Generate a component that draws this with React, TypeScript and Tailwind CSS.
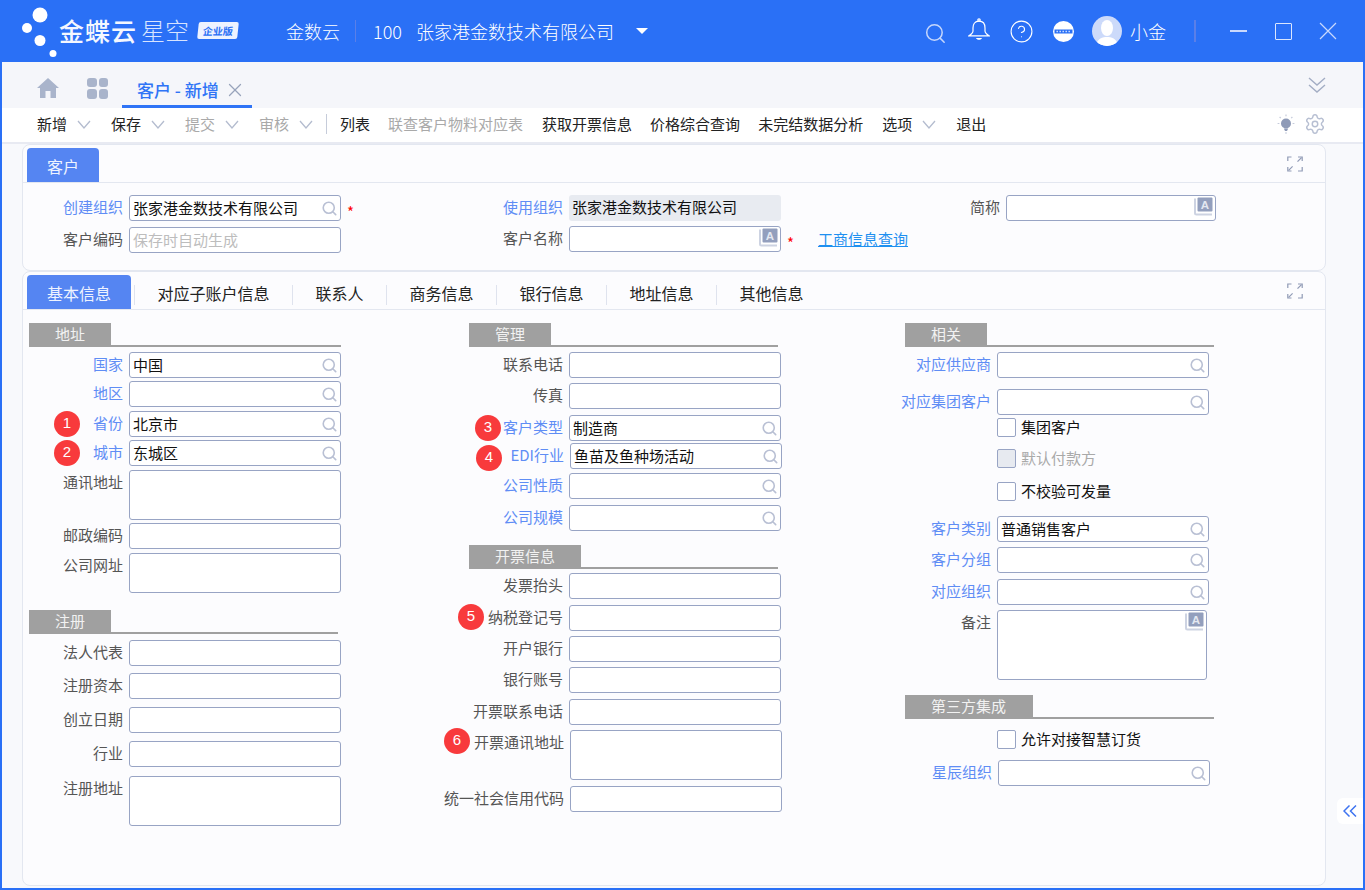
import React from 'react';
import { CircleHelp, Settings, X } from 'lucide-react';

function SearchIcon({ className, weight = 1.7 }: { className: string; weight?: number }) {
  return (
    <svg viewBox="0 0 16 16" fill="none" stroke="currentColor" className={className}>
      <circle cx="7.2" cy="7.2" r="5.9" strokeWidth={weight} />
      <path d="M11.5 11.5 L14.6 14.6" strokeWidth={weight} strokeLinecap="round" />
    </svg>
  );
}

function LangIcon() {
  return (
    <svg viewBox="0 0 19 19" className="w-[19px] h-[19px]">
      <path d="M1 1.5 V16 a1.5 1.5 0 0 0 1.5 1.5 H18" fill="none" stroke="#cdd3e2" strokeWidth="2" />
      <rect x="3.5" y="0.5" width="15" height="14" rx="1" fill="#939fbd" />
      <text x="11" y="12" textAnchor="middle" fontSize="11.5" fontWeight="700" fill="#e4e8f1" fontFamily="Liberation Sans">A</text>
    </svg>
  );
}

function ExpandIcon() {
  return (
    <svg viewBox="0 0 16 16" fill="none" stroke="#8f9ab5" strokeWidth="1.2" className="w-[16px] h-[16px]">
      <path d="M0.8 5 V1 H4.5" />
      <path d="M11 1 H15.2 V5" />
      <path d="M15.2 11 V15 H11" />
      <path d="M0.8 11 V15 H4.5" />
      <path d="M14.5 1.6 L10.5 5.6" />
      <path d="M1.6 14.4 L5.6 10.4" />
    </svg>
  );
}

function MenuChevron() {
  return (
    <svg viewBox="0 0 14 9" fill="none" stroke="#b4bccf" strokeWidth="1.3" className="ml-[10px] w-[14px] h-[9px]">
      <path d="M1 1 L7 8 L13 1" />
    </svg>
  );
}

function Logo() {
  return (
    <div className="flex items-center w-[264px] h-[62px] shrink-0">
      <svg viewBox="0 0 60 62" className="w-[60px] h-[62px] shrink-0" fill="#fff">
        <circle cx="40" cy="15" r="7.5" />
        <circle cx="27" cy="28" r="5" />
        <circle cx="40" cy="40.5" r="5.5" />
        <circle cx="53" cy="53.5" r="3.5" />
      </svg>
      <span className="text-[25px] font-medium text-[#f4f7ff] tracking-[1px] leading-[30px] -ml-[1px] mb-[2px]">金蝶云</span>
      <span className="text-[24px] font-light text-[#d8e4ff] ml-[4px] leading-[30px] mb-[2px]">星空</span>
      <span className="ml-[9px] mb-[2px] w-[40px] h-[17px] bg-[#eef3ff] rounded-[2px] -skew-x-6 text-[10px] font-bold text-[#2a6ff5] leading-[17px] text-center">企业版</span>
    </div>
  );
}

function TopBar() {
  return (
    <div className="flex items-center h-[62px] bg-[#2a70f6] text-white shrink-0">
      <Logo />
      <span className="ml-[22px] text-[18px] font-light leading-[62px] pb-[1px]">金数云</span>
      <span className="ml-[15px] w-px h-[22px] bg-[#5a7fe8]" />
      <span className="ml-[17px] text-[18px] font-light">100</span>
      <span className="ml-[14px] text-[18px] font-light">张家港金数技术有限公司</span>
      <span className="ml-[22px] w-0 h-0 border-x-[6px] border-x-transparent border-t-[6px] border-t-white" />
      <div className="ml-auto flex items-center pr-[28px]">
        <SearchIcon className="w-[21px] h-[21px] text-[#c5d6fc] mt-[5px]" weight={1.15} />
        <svg viewBox="0 0 22 24" fill="none" stroke="#fff" strokeWidth="1.2" className="ml-[22px] w-[22px] h-[24px] mb-[2px]">
          <circle cx="11" cy="2" r="1.2" />
          <path d="M11 3.2 C6.5 3.2 5 6.5 5 10 V13 C5 15 3 16.5 1 17.8 H21 C19 16.5 17 15 17 13 V10 C17 6.5 15.5 3.2 11 3.2 Z" />
          <path d="M8 20 H14 C13.5 22.4 8.5 22.4 8 20 Z" fill="#fff" stroke="none" />
        </svg>
        <CircleHelp className="w-[25px] h-[25px] ml-[19px]" strokeWidth={1.05} />
        <svg viewBox="0 0 21 21" className="ml-[19px] w-[21px] h-[21px]">
          <circle cx="10.5" cy="10.5" r="10.5" fill="#fff" />
          <rect x="1.5" y="8.5" width="18" height="4" fill="#2a70f6" />
          <path d="M3.5 10.5 H17.5" stroke="#dbe6fe" strokeWidth="1.4" strokeDasharray="1.4 1.6" />
        </svg>
        <span className="ml-[18px] w-[30px] h-[30px] rounded-full bg-[#ccdafa] overflow-hidden">
          <svg viewBox="0 0 30 30" className="w-[30px] h-[30px]" fill="#fff">
            <ellipse cx="15" cy="12" rx="6" ry="8" />
            <path d="M4 30 C5 22 11 21 15 21 C19 21 25 22 26 30 Z" />
          </svg>
        </span>
        <span className="ml-[8px] text-[18px] font-light">小金</span>
        <span className="ml-[28px] w-[2px] h-[22px] bg-[#5a7fe8]" />
        <span className="ml-[34px] w-[17px] h-[2px] bg-[#c9d9fd]" />
        <span className="ml-[28px] w-[17px] h-[17px] border-[1.5px] border-[#dbe6fe] rounded-[1px]" />
        <svg viewBox="0 0 18 18" fill="none" stroke="#c9d9fd" strokeWidth="1.2" className="ml-[27px] w-[18px] h-[18px]">
          <path d="M1 1 L17 17 M17 1 L1 17" />
        </svg>
      </div>
    </div>
  );
}

function TabBar() {
  return (
    <div className="flex items-center h-[46px] bg-[#f5f6fa] shrink-0 relative">
      <svg viewBox="0 0 22 20" className="ml-[35px] w-[22px] h-[20px] mt-[6px]" fill="#a9b4cb">
        <path d="M11 0 L22 10 H19 V20 H13.5 V13 H8.5 V20 H3 V10 H0 Z" />
      </svg>
      <span className="ml-[28px] mt-[6px] grid grid-cols-2 gap-[2px] w-[21px]">
        <i className="h-[9.5px] rounded-[3px] bg-[#a9b4cb]" />
        <i className="h-[9.5px] rounded-[3px] bg-[#a9b4cb]" />
        <i className="h-[9.5px] rounded-[3px] bg-[#a9b4cb]" />
        <i className="h-[9.5px] rounded-[3px] bg-[#a9b4cb]" />
      </span>
      <div className="ml-[14px] self-end flex items-center h-[31px] w-[130px] pl-[15px] border-b-[3px] border-[#2f74f6] text-[#2f74f6] text-[17px] font-medium whitespace-pre">
        <span className="-mt-[2px]">客户 - 新增</span>
        <X className="ml-[5px] w-[22px] h-[22px] text-[#98a3bb] -mt-[2px]" strokeWidth={1.4} />
      </div>
      <svg viewBox="0 0 18 16" fill="none" stroke="#a3adc4" strokeWidth="1.4" className="absolute right-[37px] top-[15px] w-[18px] h-[16px]">
        <path d="M1 1 L9 8 L17 1 M1 8 L9 15 L17 8" />
      </svg>
    </div>
  );
}

function ToolItem({ text, off, menu, gap }: { text: string; off?: boolean; menu?: boolean; gap?: string }) {
  return (
    <div className={`flex items-center ${gap ?? (menu ? 'mr-[20px]' : 'mr-[18px]')} ${off ? 'text-[#a9a9a9]' : 'text-[#222]'}`}>
      <span>{text}</span>
      {menu && <MenuChevron />}
    </div>
  );
}

function ToolBar() {
  return (
    <div className="flex items-center h-[32px] pb-[2px] bg-white pl-[35px] text-[15px] shrink-0 border-b-[2px] border-[#e8eaf2] box-content">
      <ToolItem text="新增" menu />
      <ToolItem text="保存" menu />
      <ToolItem text="提交" off menu />
      <div className="flex items-center text-[#a9a9a9]">
        <span>审核</span>
        <MenuChevron />
      </div>
      <span className="ml-[13px] mr-[13px] w-px h-[20px] bg-[#c6ccda]" />
      <ToolItem text="列表" />
      <ToolItem text="联查客户物料对应表" off gap="mr-[19px]" />
      <ToolItem text="获取开票信息" />
      <ToolItem text="价格综合查询" />
      <ToolItem text="未完结数据分析" gap="mr-[19px]" />
      <ToolItem text="选项" menu />
      <ToolItem text="退出" />
      <div className="ml-auto flex items-center pr-[37px]">
        <svg viewBox="0 0 18 20" className="w-[18px] h-[20px]" fill="none" stroke="#c5cbdb" strokeWidth="1.2">
          <circle cx="9" cy="9.5" r="5" fill="#8e9ab7" stroke="none" />
          <path d="M6.8 14.5 H11.2 L10 17 H8 Z" fill="#8e9ab7" stroke="none" />
          <path d="M8 19 H10 M9 0.5 V2.2 M2.6 3 L3.8 4.2 M15.4 3 L14.2 4.2 M0.6 9.5 H2.4 M15.6 9.5 H17.4" />
        </svg>
        <Settings className="ml-[9px] w-[22px] h-[22px] text-[#b7bfd2]" strokeWidth={1.6} />
      </div>
    </div>
  );
}

type Row = {
  label?: string;
  link?: boolean;
  value?: string;
  placeholder?: string;
  kind?: 'search' | 'lang' | 'plain' | 'shaded';
  mt: string;
  box?: string;
  extra?: React.ReactNode;
  badge?: { n: number; pos: string };
  check?: 'on' | 'off';
  shift?: string;
};

function Badge({ n, pos }: { n: number; pos: string }) {
  return (
    <span className={`absolute top-0 w-[26px] h-[26px] rounded-full bg-[#f83a3c] text-white text-[15px] leading-[24px] text-center font-['Liberation_Sans',sans-serif] ${pos}`}>
      {n}
    </span>
  );
}

function FormRow({ row, labelW = 'w-[94px]' }: { row: Row; labelW?: string }) {
  if (row.check) {
    return (
      <div className={`flex items-center h-[19px] ${row.mt}`}>
        <span className={`${labelW} shrink-0`} />
        <span className={`ml-[6px] w-[19px] h-[19px] rounded-[2px] border border-[#98a4c4] ${row.check === 'off' ? 'bg-[#e7eaf0]' : 'bg-white'}`} />
        <span className={`ml-[5px] text-[15px] ${row.check === 'off' ? 'text-[#a9a9a9]' : 'text-[#111]'}`}>{row.label}</span>
      </div>
    );
  }
  const kind = row.kind ?? 'search';
  return (
    <div className={`relative flex items-start ${row.mt} ${row.shift ?? ''}`}>
      {row.badge && <Badge n={row.badge.n} pos={row.badge.pos} />}
      <label className={`${labelW} shrink-0 flex justify-end text-[15px] leading-[23px] whitespace-nowrap ${row.link ? 'text-[#5f8df5]' : 'text-[#555]'}`}>
        {row.label}
      </label>
      <div
        className={`ml-[6px] relative shrink-0 rounded-[3px] ${row.box ?? 'w-[212px] h-[26px]'} ${
          kind === 'shaded' ? 'bg-[#e8ebf1]' : 'bg-white border border-[#98a4c4]'
        }`}
      >
        <span className={`absolute left-[3px] top-0 text-[15px] leading-[24px] whitespace-nowrap ${row.placeholder ? 'text-[#bdbdbd]' : 'text-[#111]'}`}>
          {row.value ?? row.placeholder}
        </span>
        {kind === 'search' && <SearchIcon className="absolute right-[3px] top-[5px] w-[15px] h-[15px] text-[#b9c0d4]" />}
        {kind === 'lang' && (
          <span className="absolute right-[2px] top-[1px]">
            <LangIcon />
          </span>
        )}
      </div>
      {row.extra}
    </div>
  );
}

function Section({ title, box, line, mt }: { title: string; box: string; line: string; mt: string }) {
  return (
    <div className={`h-[24px] border-b-[2px] border-[#a0a0a0] ${line} ${mt}`}>
      <div className={`h-[22px] bg-[#a0a0a0] text-[#f2f2f2] text-[15px] leading-[21px] pl-[26px] ${box}`}>{title}</div>
    </div>
  );
}

const Star = <span className="ml-[6px] mt-[7px] text-[15px] text-[#f00] leading-[20px]">*</span>;

type Item = Row | { section: string; box: string; line: string; mt: string };

const leftRows: Item[] = [
  { section: '地址', box: 'w-[82px]', line: 'w-[312px]', mt: 'mt-0' },
  { label: '国家', link: true, value: '中国', mt: 'mt-[5px]' },
  { label: '地区', link: true, mt: 'mt-[3px]' },
  { label: '省份', link: true, value: '北京市', mt: 'mt-[4px]', badge: { n: 1, pos: 'left-[25px]' } },
  { label: '城市', link: true, value: '东城区', mt: 'mt-[3px]', badge: { n: 2, pos: 'left-[25px]' } },
  { label: '通讯地址', kind: 'plain', mt: 'mt-[4px]', box: 'w-[212px] h-[50px]' },
  { label: '邮政编码', kind: 'plain', mt: 'mt-[3px]' },
  { label: '公司网址', kind: 'plain', mt: 'mt-[4px]', box: 'w-[212px] h-[40px]' },
  { section: '注册', box: 'w-[82px]', line: 'w-[309px]', mt: 'mt-[17px]' },
  { label: '法人代表', kind: 'plain', mt: 'mt-[6px]' },
  { label: '注册资本', kind: 'plain', mt: 'mt-[7px]' },
  { label: '创立日期', kind: 'plain', mt: 'mt-[8px]' },
  { label: '行业', kind: 'plain', mt: 'mt-[8px]' },
  { label: '注册地址', kind: 'plain', mt: 'mt-[9px]', box: 'w-[212px] h-[50px]' },
];

const middleRows: Item[] = [
  { section: '管理', box: 'w-[82px]', line: 'w-[309px]', mt: 'mt-0' },
  { label: '联系电话', kind: 'plain', mt: 'mt-[5px]' },
  { label: '传真', kind: 'plain', mt: 'mt-[5px]' },
  { label: '客户类型', link: true, value: '制造商', mt: 'mt-[6px]', badge: { n: 3, pos: 'left-[6px]' } },
  { label: 'EDI行业', link: true, value: '鱼苗及鱼种场活动', mt: 'mt-[2px]', shift: 'ml-[1px]', badge: { n: 4, pos: 'left-[6px] mt-[2px]' } },
  { label: '公司性质', link: true, mt: 'mt-[4px]' },
  { label: '公司规模', link: true, mt: 'mt-[6px]' },
  { section: '开票信息', box: 'w-[112px]', line: 'w-[309px]', mt: 'mt-[14px]' },
  { label: '发票抬头', kind: 'plain', mt: 'mt-[4px]' },
  { label: '纳税登记号', kind: 'plain', mt: 'mt-[6px]', badge: { n: 5, pos: '-left-[11px] -mt-[1px]' } },
  { label: '开户银行', kind: 'plain', mt: 'mt-[5px]' },
  { label: '银行账号', kind: 'plain', mt: 'mt-[5px]' },
  { label: '开票联系电话', kind: 'plain', mt: 'mt-[6px]' },
  { label: '开票通讯地址', kind: 'plain', mt: 'mt-[5px]', shift: 'ml-[1px]', box: 'w-[212px] h-[50px]', badge: { n: 6, pos: '-left-[26px] -mt-[2px]' } },
  { label: '统一社会信用代码', kind: 'plain', mt: 'mt-[6px]', shift: 'ml-[1px]' },
];

const rightRows: Item[] = [
  { section: '相关', box: 'w-[82px]', line: 'w-[309px]', mt: 'mt-0' },
  { label: '对应供应商', link: true, mt: 'mt-[5px]' },
  { label: '对应集团客户', link: true, mt: 'mt-[11px]' },
  { label: '集团客户', check: 'on', mt: 'mt-[3px]' },
  { label: '默认付款方', check: 'off', mt: 'mt-[12px]' },
  { label: '不校验可发量', check: 'on', mt: 'mt-[14px]' },
  { label: '客户类别', link: true, value: '普通销售客户', mt: 'mt-[15px]' },
  { label: '客户分组', link: true, mt: 'mt-[5px]' },
  { label: '对应组织', link: true, mt: 'mt-[6px]' },
  { label: '备注', kind: 'lang', mt: 'mt-[5px]', box: 'w-[210px] h-[70px]' },
  { section: '第三方集成', box: 'w-[128px]', line: 'w-[309px]', mt: 'mt-[15px]' },
  { label: '允许对接智慧订货', check: 'on', mt: 'mt-[11px]' },
  { label: '星辰组织', link: true, mt: 'mt-[11px]', shift: 'ml-[1px]' },
];

function Column({ rows, labelW, className }: { rows: Item[]; labelW?: string; className: string }) {
  return (
    <div className={`flex flex-col ${className}`}>
      {rows.map((r, i) =>
        'section' in r ? (
          <Section key={i} title={r.section} box={r.box} line={r.line} mt={r.mt} />
        ) : (
          <FormRow key={i} row={r} labelW={labelW} />
        )
      )}
    </div>
  );
}

function CardTab({ text, w }: { text: string; w: string }) {
  return (
    <div className={`self-end ml-[4px] h-[34px] rounded-t-[4px] bg-[#5585f2] text-[#eef3ff] text-[16px] leading-[36px] pl-[20px] ${w}`}>{text}</div>
  );
}

export default function App() {
  return (
    <div className="w-[1365px] h-[890px] flex flex-col overflow-hidden font-['Noto_Sans_CJK_SC','Noto_Sans',sans-serif] bg-white">
      <TopBar />
      <div className="flex-1 flex flex-col border-x-[2px] border-b-[2px] border-[#2a70f6] relative min-h-0">
        <TabBar />
        <ToolBar />
        <div className="flex-1 pl-[20px] min-h-0 bg-[#f8f9fc]">
          {/* 客户 header card */}
          <div className="w-[1304px] h-[127px] rounded-[8px] border border-[#e3e7f0] bg-[#fcfcfe]">
            <div className="relative flex h-[38px] border-b border-[#e3e7f0]">
              <CardTab text="客户" w="w-[72px]" />
              <span className="absolute right-[22px] top-[11px]">
                <ExpandIcon />
              </span>
            </div>
            <div className="flex pl-[6px] pt-[7px]">
              <div className="flex flex-col w-[440px]">
                <FormRow row={{ label: '创建组织', link: true, value: '张家港金数技术有限公司', mt: 'mt-[5px]', extra: Star }} />
                <FormRow row={{ label: '客户编码', placeholder: '保存时自动生成', kind: 'plain', mt: 'mt-[5px]' }} />
              </div>
              <div className="flex flex-col w-[437px]">
                <FormRow row={{ label: '使用组织', link: true, value: '张家港金数技术有限公司', kind: 'shaded', mt: 'mt-[5px]' }} />
                <FormRow
                  row={{
                    label: '客户名称',
                    kind: 'lang',
                    mt: 'mt-[5px]',
                    extra: (
                      <>
                        {Star}
                        <a className="ml-[24px] text-[15px] leading-[26px] text-[#1e90f0] underline whitespace-nowrap">工商信息查询</a>
                      </>
                    ),
                  }}
                />
              </div>
              <div className="flex flex-col">
                <FormRow row={{ label: '简称', kind: 'lang', mt: 'mt-[5px]', box: 'w-[210px] h-[26px]' }} />
              </div>
            </div>
          </div>
          {/* 基本信息 tabs card */}
          <div className="w-[1304px] h-[615px] rounded-[8px] border border-[#e3e7f0] bg-[#fcfcfe]">
            <div className="relative flex items-center h-[38px] border-b border-[#e3e7f0]">
              <CardTab text="基本信息" w="w-[104px] mr-[3px]" />
              {['对应子账户信息', '联系人', '商务信息', '银行信息', '地址信息', '其他信息'].map((t) => (
                <div key={t} className="h-[20px] mt-[8px] border-l border-[#dfe3ee] px-[22.5px] text-[16px] leading-[20px] text-[#222] whitespace-nowrap">
                  <span className="relative -top-[2px]">{t}</span>
                </div>
              ))}
              <span className="absolute right-[22px] top-[11px]">
                <ExpandIcon />
              </span>
            </div>
            <div className="flex pl-[6px] pt-[13px]">
              <Column className="w-[440px]" rows={leftRows} />
              <Column className="w-[436px]" rows={middleRows} />
              <Column className="flex-1" labelW="w-[86px]" rows={rightRows} />
            </div>
          </div>
        </div>
        <div className="absolute right-0 top-[736px] w-[26px] h-[26px] rounded-l-[6px] bg-white flex items-center justify-center">
          <svg viewBox="0 0 14 12" fill="none" stroke="#3f74f0" strokeWidth="1.5" className="w-[14px] h-[12px]">
            <path d="M6.5 0.5 L1 6 L6.5 11.5 M13 0.5 L7.5 6 L13 11.5" />
          </svg>
        </div>
      </div>
    </div>
  );
}
